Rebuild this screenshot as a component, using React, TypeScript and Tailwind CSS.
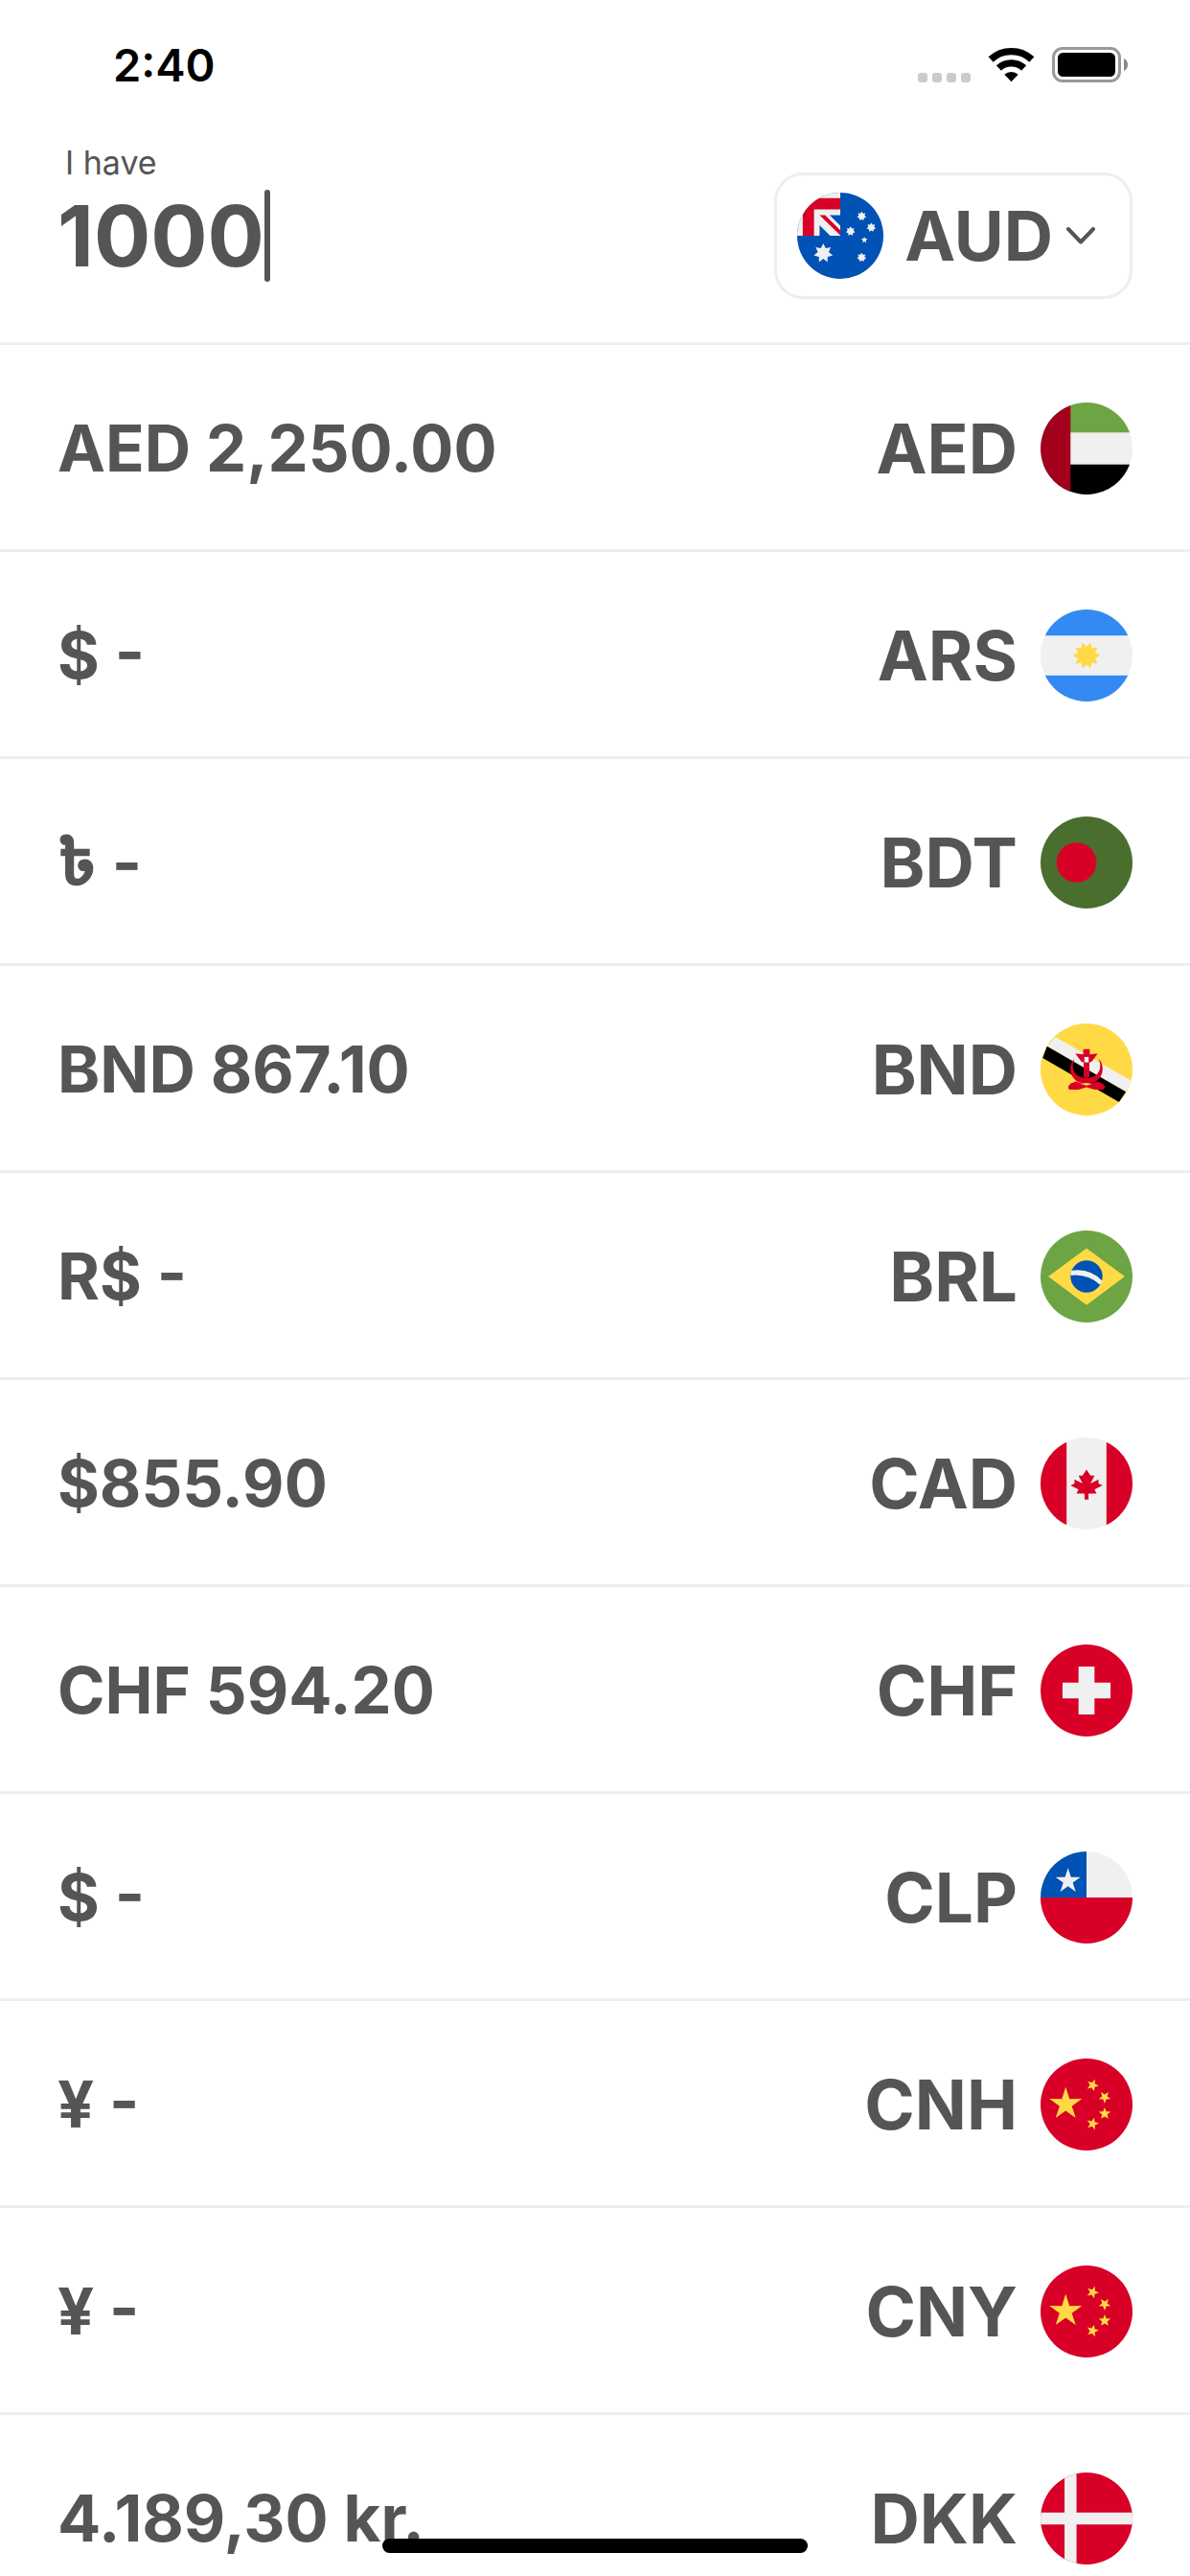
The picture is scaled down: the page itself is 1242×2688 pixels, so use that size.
import { useId, useState, type ReactNode } from "react";

const WHITE = "#f0f0f0";
const RED = "#d80027";
const BLUE = "#0052b4";
const GREEN = "#6da544";
const YELLOW = "#ffda44";

/** Points of a regular star; `turn` is clockwise degrees from straight up. */
function star(cx: number, cy: number, points: number, outer: number, inner: number, turn = 0) {
  const out: string[] = [];
  for (let i = 0; i < points * 2; i++) {
    const r = i % 2 === 0 ? outer : inner;
    const a = ((turn + (i * 180) / points) * Math.PI) / 180;
    out.push(`${(cx + r * Math.sin(a)).toFixed(1)},${(cy - r * Math.cos(a)).toFixed(1)}`);
  }
  return out.join(" ");
}

const china = (
  <>
    <rect width="512" height="512" fill={RED} />
    <g fill={YELLOW}>
      <polygon points={star(140, 254, 5, 95, 36)} />
      <polygon points={star(290, 149, 5, 35, 15, 22)} />
      <polygon points={star(357, 215, 5, 35, 15, 36)} />
      <polygon points={star(357, 307, 5, 35, 15)} />
      <polygon points={star(290, 363, 5, 35, 15, 14)} />
    </g>
  </>
);

const flags: Record<string, ReactNode> = {
  AUD: (
    <>
      <rect width="512" height="512" fill={BLUE} />
      <rect width="256" height="256" fill={WHITE} />
      <path d="M33 33H256V100H100V256H33Z" fill={RED} />
      <path d="M193 133H256V196Z" fill={BLUE} />
      <path d="M133 193L196 256H133Z" fill={BLUE} />
      <path d="M133 133H166L256 223V253Z" fill={RED} />
      <g fill={WHITE}>
        <polygon points={star(155, 360, 7, 58, 33)} />
        <polygon points={star(383, 140, 7, 28, 18)} />
        <polygon points={star(440, 207, 7, 28, 18)} />
        <polygon points={star(317, 229, 7, 28, 18)} />
        <polygon points={star(383, 385, 7, 28, 18)} />
        <polygon points={star(399, 281, 5, 20, 9)} />
      </g>
    </>
  ),
  AED: (
    <>
      <rect width="512" height="512" fill={WHITE} />
      <rect width="512" height="167" fill={GREEN} />
      <rect y="345" width="512" height="167" fill="#000" />
      <rect width="167" height="512" fill="#a2001d" />
    </>
  ),
  ARS: (
    <>
      <rect width="512" height="512" fill={WHITE} />
      <rect width="512" height="145" fill="#338af3" />
      <rect y="367" width="512" height="145" fill="#338af3" />
      <polygon points={star(256, 256, 10, 76, 50, 18)} fill={YELLOW} />
    </>
  ),
  BDT: (
    <>
      <rect width="512" height="512" fill="#496e2d" />
      <circle cx="200" cy="256" r="111" fill={RED} />
    </>
  ),
  BND: (
    <>
      <rect width="512" height="512" fill={YELLOW} />
      <path d="M82 75L512 323L475 380L36 126Z" fill={WHITE} />
      <path d="M36 126L475 380L437 437L12 192Z" fill="#000" />
      <g fill={RED}>
        <path d="M238 142H274V172L310 168H318L286 210L276 216H236L226 210L194 168H202L238 172Z" />
        <path d="M240 214H272V297L256 304L240 297Z" />
        <path d="M190 195C160 225 158 275 186 306C220 345 292 345 326 306C354 275 352 225 322 195C340 232 334 268 308 288C282 308 230 308 204 288C178 268 172 232 190 195Z" />
        <path d="M166 334L196 322L256 342L316 322L346 334L360 352L350 368H300L256 354L212 368H158L154 352Z" />
      </g>
      <rect x="244" y="186" width="24" height="30" fill={WHITE} />
      <path d="M224 336L256 345L288 336L256 330Z" fill={YELLOW} />
    </>
  ),
  BRL: (
    <>
      <rect width="512" height="512" fill={GREEN} />
      <path d="M256 98L469 256L256 414L43 256Z" fill={YELLOW} />
      <circle cx="256" cy="256" r="89" fill={BLUE} />
      <path d="M172 223Q276 208 345 282L332 302Q262 240 167 250Z" fill={WHITE} />
    </>
  ),
  CAD: (
    <>
      <rect width="512" height="512" fill={WHITE} />
      <rect width="145" height="512" fill={RED} />
      <rect x="367" width="145" height="512" fill={RED} />
      <path
        d="M300.5 289.4L345 267.1L322.8 256V233.7L278.3 256L300.5 211.5H278.3L256 178.1L233.7 211.5H211.5L233.7 256L189.2 233.7V256L167 267.1L211.5 289.4L200.3 311.7H244.9V345H267.1V311.7H311.7Z"
        fill={RED}
      />
    </>
  ),
  CHF: (
    <>
      <rect width="512" height="512" fill={RED} />
      <path d="M389.6 211.5H300.5V122.4H211.5V211.5H122.4V300.5H211.5V389.6H300.5V300.5H389.6Z" fill={WHITE} />
    </>
  ),
  CLP: (
    <>
      <rect width="512" height="512" fill={WHITE} />
      <rect width="256" height="256" fill={BLUE} />
      <rect y="256" width="512" height="256" fill={RED} />
      <polygon points={star(153, 165, 5, 73, 28)} fill={WHITE} />
    </>
  ),
  CNH: china,
  CNY: china,
  DKK: (
    <>
      <rect width="512" height="512" fill={RED} />
      <path d="M133.6 0H200.3V222.6H512V289.4H200.3V512H133.6V289.4H0V222.6H133.6Z" fill={WHITE} />
    </>
  ),
};

function Flag({ code, className }: { code: string; className: string }) {
  const clip = useId();
  return (
    <svg viewBox="0 0 512 512" className={`shrink-0 ${className}`} aria-hidden="true">
      <clipPath id={clip}>
        <circle cx="256" cy="256" r="256" />
      </clipPath>
      <g clipPath={`url(#${clip})`}>{flags[code]}</g>
    </svg>
  );
}

const rates = [
  { code: "AED", amount: "AED 2,250.00" },
  { code: "ARS", amount: "$ -" },
  { code: "BDT", amount: "৳ -" },
  { code: "BND", amount: "BND 867.10" },
  { code: "BRL", amount: "R$ -" },
  { code: "CAD", amount: "$855.90" },
  { code: "CHF", amount: "CHF 594.20" },
  { code: "CLP", amount: "$ -" },
  { code: "CNH", amount: "¥ -" },
  { code: "CNY", amount: "¥ -" },
  { code: "DKK", amount: "4.189,30 kr." },
];

function StatusBar() {
  return (
    <div className="flex h-[135px] shrink-0 items-center justify-between pr-16 pl-[118px] text-black">
      <span className="text-[47px] leading-[56px] font-semibold">2:40</span>
      <div className="flex items-end gap-[18px]">
        <div className="flex gap-[5px]">
          {[0, 1, 2, 3].map((n) => (
            <span key={n} className="size-[10px] rounded-[3px] bg-[#cbcbcb]" />
          ))}
        </div>
        <svg width="49" height="37" viewBox="0 0 49 37" fill="none" aria-label="Wi-Fi">
          <path d="M3.1 13A31.4 31.4 0 0 1 45.9 13" stroke="#000" strokeWidth="7.4" />
          <path d="M11.4 22A19.2 19.2 0 0 1 37.6 22" stroke="#000" strokeWidth="7.4" />
          <path d="M17.3 28.8A10.5 10.5 0 0 1 31.7 28.8L24.5 36.2Z" fill="#000" />
        </svg>
        <svg width="80" height="37" viewBox="0 0 80 37" aria-label="Battery full">
          <rect x="1.5" y="1.5" width="69" height="34" rx="9.5" fill="none" stroke="#999" strokeWidth="3" />
          <rect x="6" y="6" width="60" height="25" rx="5.5" fill="#000" />
          <path d="M75 12Q79 14 79 18.5Q79 23 75 25Z" fill="#888" />
        </svg>
      </div>
    </div>
  );
}

export default function App() {
  const [amount, setAmount] = useState("1000");
  return (
    <div className="relative flex h-screen flex-col overflow-hidden bg-white font-['Inter','Noto_Sans_Bengali',sans-serif] text-[#555]">
      <StatusBar />

      <header className="flex shrink-0 items-end justify-between border-b-[3px] border-[#eee] px-[60px] pt-[15px] pb-[45px]">
        <div className="flex flex-col gap-2 pb-[18px]">
          <label htmlFor="amount" className="pl-2 text-[34px] leading-[40px]">
            I have
          </label>
          <div className="flex items-center">
            <input
              id="amount"
              inputMode="decimal"
              value={amount}
              onChange={(e) => setAmount(e.target.value)}
              className="field-sizing-content h-24 bg-transparent text-[88px] leading-[96px] font-bold caret-transparent outline-none"
            />
            <span className="h-24 w-[6px] rounded-full bg-[#555]" />
          </div>
        </div>
        <button
          type="button"
          aria-haspopup="listbox"
          className="flex h-[132px] items-center rounded-[30px] border-[3px] border-[#eee] pr-[36px] pl-[21px]"
        >
          <Flag code="AUD" className="size-[90px]" />
          <span className="pr-[14px] pl-[22px] text-[71px] leading-[96px] font-bold">AUD</span>
          <svg width="30" height="18" viewBox="0 0 30 18" fill="none" aria-hidden="true">
            <path d="M2 2L15 15.5L28 2" stroke="#555" strokeWidth="4" strokeLinecap="round" strokeLinejoin="round" />
          </svg>
        </button>
      </header>

      <ul className="min-h-0 flex-1 overflow-hidden">
        {rates.map(({ code, amount: value }) => (
          <li
            key={code}
            className="flex items-center justify-between border-b-[3px] border-[#eee] px-[60px] pt-[60px] pb-[57px] font-bold"
          >
            <span className="text-[67px] leading-[96px]">{value}</span>
            <span className="flex items-center gap-6">
              <span className="text-[71px] leading-[96px]">{code}</span>
              <Flag code={code} className="size-24" />
            </span>
          </li>
        ))}
      </ul>

      <div className="absolute bottom-6 left-1/2 h-[15px] w-[444px] -translate-x-1/2 rounded-full bg-black" />
    </div>
  );
}
